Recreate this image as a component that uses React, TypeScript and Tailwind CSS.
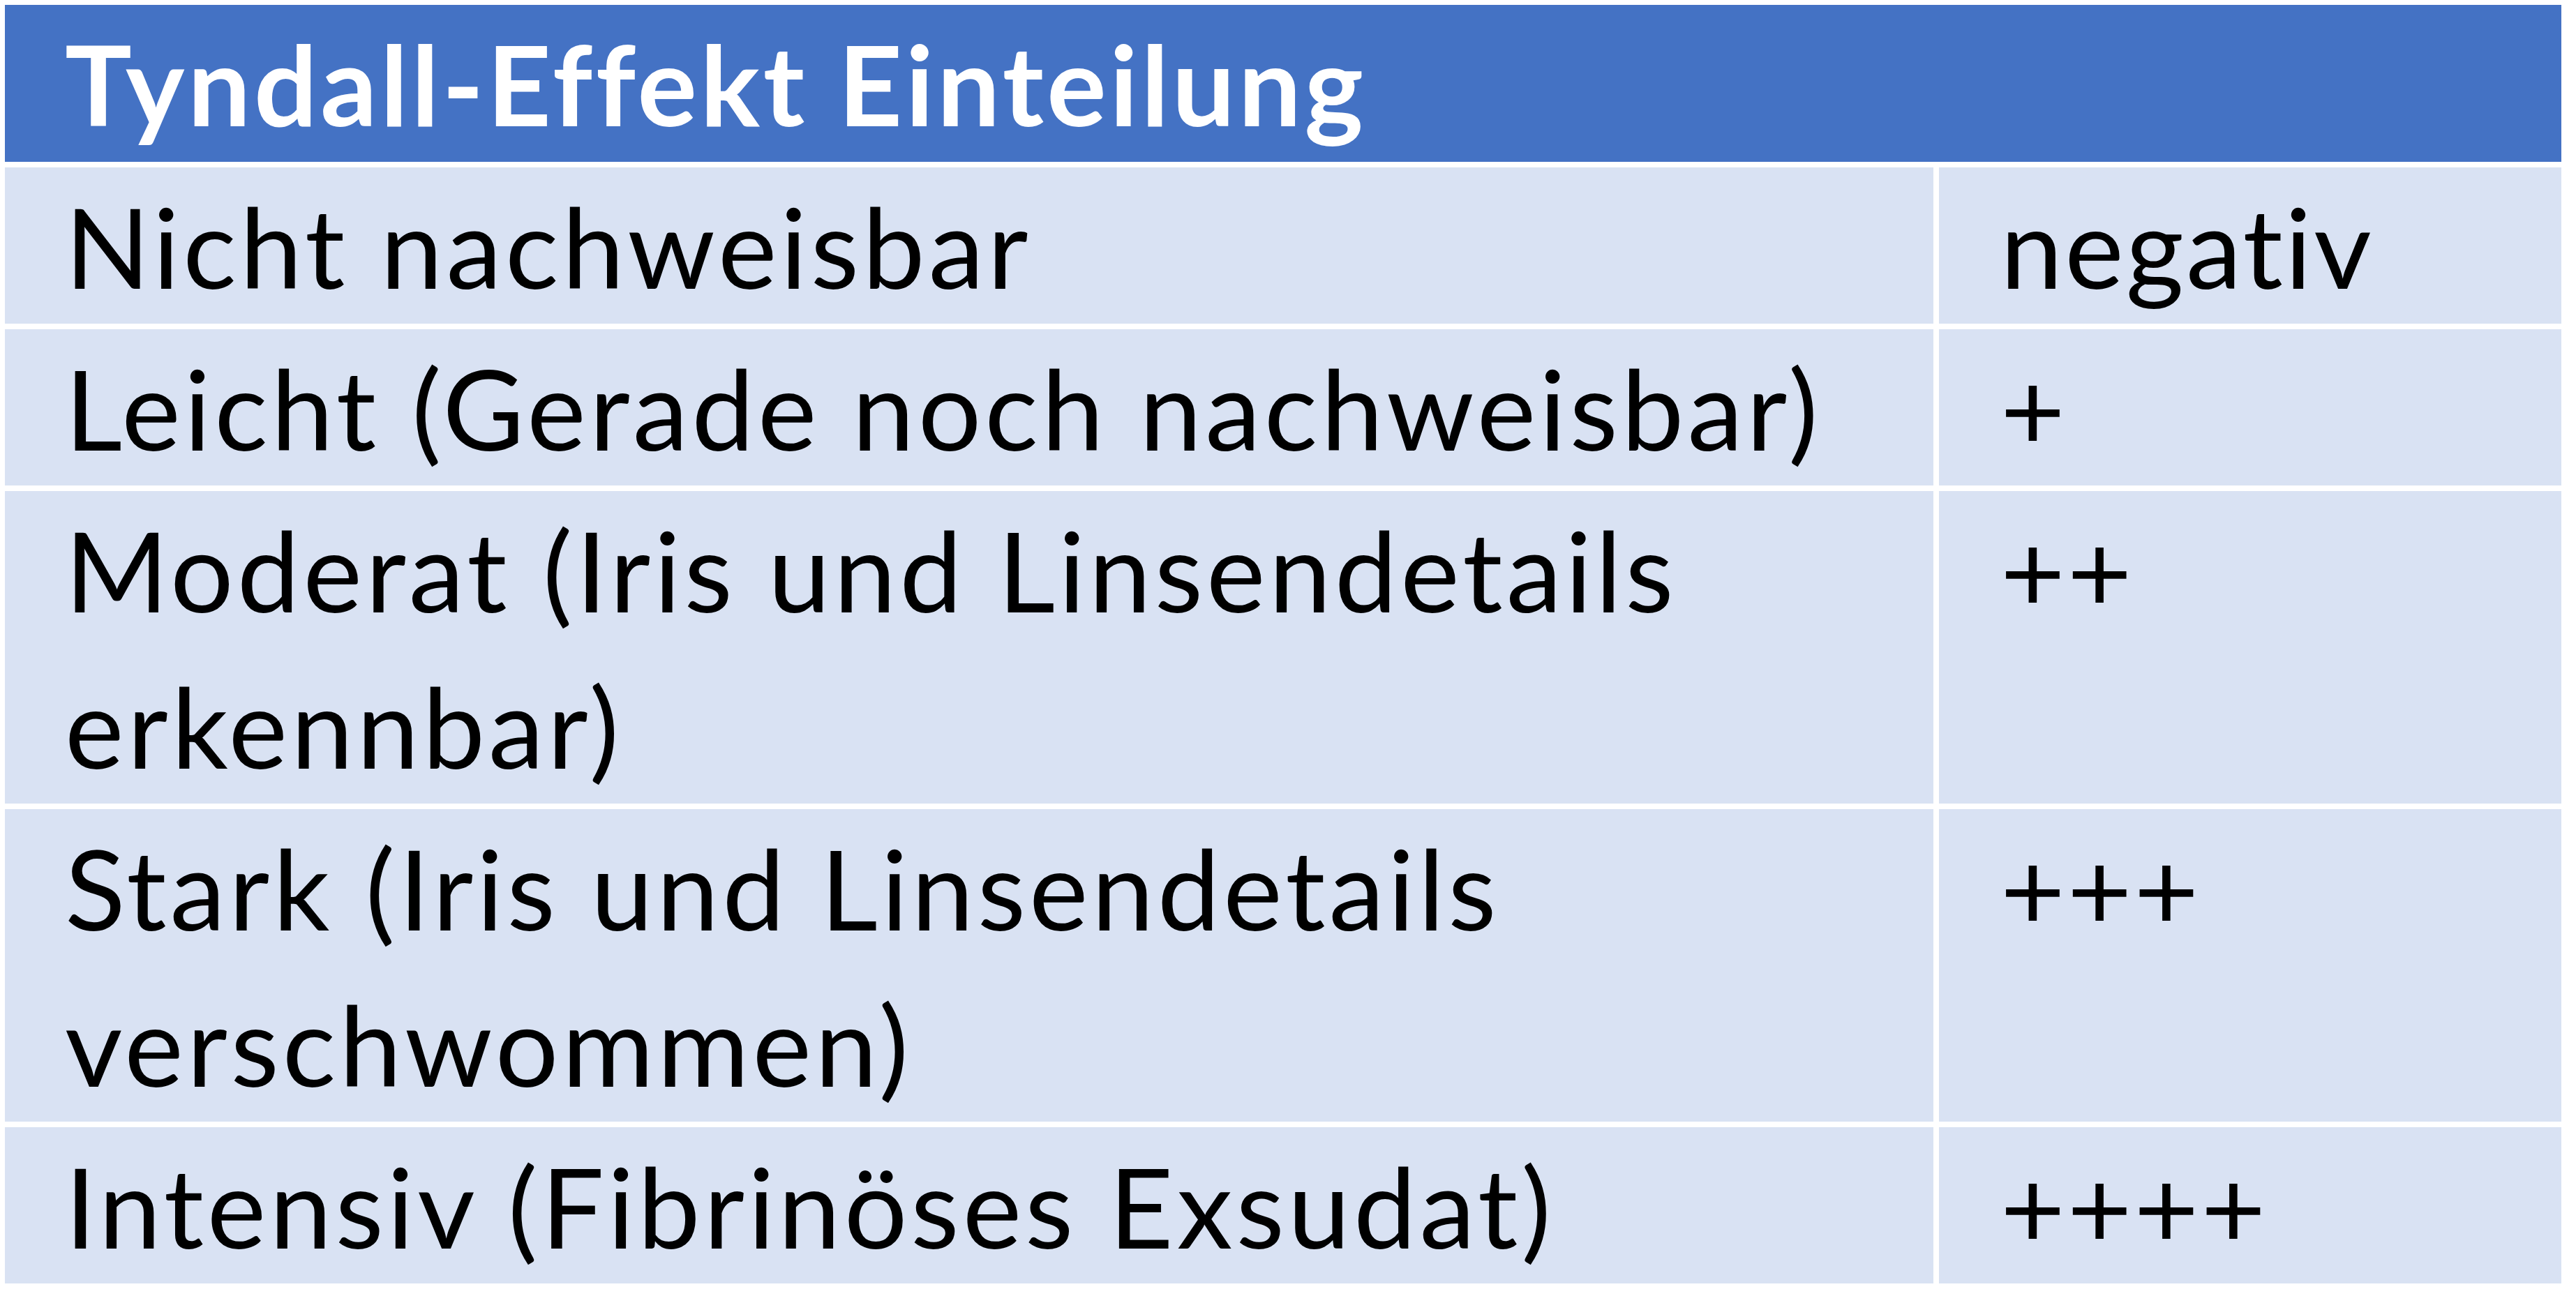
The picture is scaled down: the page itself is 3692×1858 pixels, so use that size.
const rows: { label: React.ReactNode; grade: string; tall?: boolean }[] = [
  { label: 'Nicht nachweisbar', grade: 'negativ' },
  { label: 'Leicht (Gerade noch nachweisbar)', grade: '+' },
  {
    label: (
      <>
        Moderat (Iris und Linsendetails
        <br />
        erkennbar)
      </>
    ),
    grade: '++',
    tall: true,
  },
  {
    label: (
      <>
        Stark (Iris und Linsendetails
        <br />
        verschwommen)
      </>
    ),
    grade: '+++',
    tall: true,
  },
  { label: 'Intensiv (Fibrinöses Exsudat)', grade: '++++' },
];

export default function App() {
  return (
    <div className="min-h-screen w-full bg-white pl-[7px] pt-[7px] font-['Lato',sans-serif] [font-variant-ligatures:none]">
      <div className="grid w-[3664px] grid-cols-[2764px_892px] gap-x-2 gap-y-2">
        <div className="col-span-2 h-[225px] bg-[#4472C4] pl-[86px] text-[160px] font-bold leading-[224px] tracking-[4.6px] text-white">
          Tyndall-Effekt Einteilung
        </div>
        {rows.map((row, i) => (
          <div key={i} className="contents">
            <div
              className={
                row.tall
                  ? 'h-[448px] bg-[#D9E2F3] pl-[86px] text-[160px] leading-[224px] tracking-[5px] text-black'
                  : 'h-[224px] bg-[#D9E2F3] pl-[86px] text-[160px] leading-[224px] tracking-[5px] text-black'
              }
            >
              {row.label}
            </div>
            <div className="bg-[#D9E2F3] pl-[88px] text-[160px] leading-[224px] tracking-[3px] text-black">
              {row.grade}
            </div>
          </div>
        ))}
      </div>
    </div>
  );
}
